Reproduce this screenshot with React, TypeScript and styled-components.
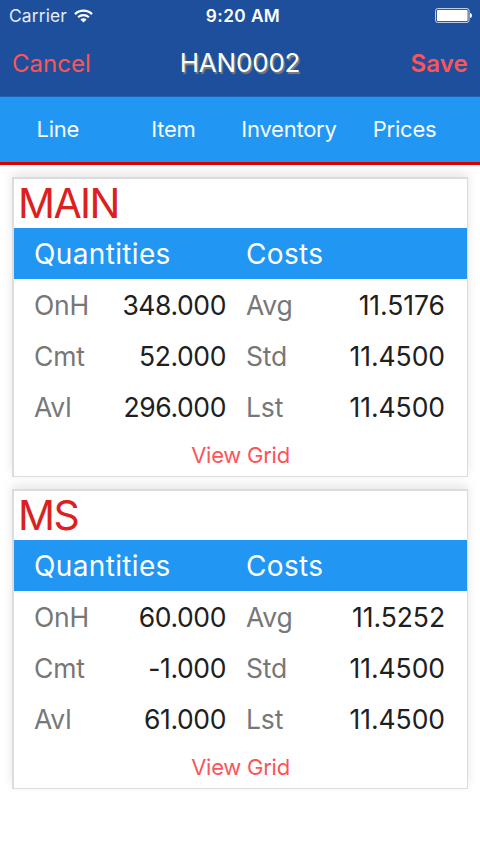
import React from "react";
import styled, { createGlobalStyle } from "styled-components";

const GlobalStyle = createGlobalStyle`
  *, *::before, *::after { box-sizing: border-box; }
  body {
    margin: 0;
    background: #fff;
    font-family: Inter, "Liberation Sans", sans-serif;
    font-weight: 400;
  }
  button { font: inherit; border: 0; padding: 0; background: none; }
`;

const Screen = styled.div`
  width: 480px;
  height: 852px;
  overflow: hidden;
  background: #fff;
`;

const Header = styled.header`
  height: 97px;
  background: #1d4f9c;
  border-bottom: 1px solid #1c62ae;
`;

const StatusBar = styled.div`
  display: grid;
  grid-template-columns: 1fr auto 1fr;
  align-items: center;
  height: 31px;
  padding: 0 7px 0 9px;
  color: #fff;
`;

const Carrier = styled.div`
  display: flex;
  align-items: center;
  gap: 7px;
  font-size: 17.4px;
  letter-spacing: 0.15px;
  color: #e6edf6;
`;

const Clock = styled.div`
  font-size: 17.3px;
  font-weight: 600;
  letter-spacing: 0.4px;
  padding-left: 4px;
`;

const Battery = styled.svg`
  justify-self: end;
`;

const NavBar = styled.div`
  display: grid;
  grid-template-columns: 1fr auto 1fr;
  align-items: center;
  height: 64px;
  padding: 0 12px;
`;

const NavButton = styled.button<{ $strong?: boolean }>`
  justify-self: ${(p) => (p.$strong ? "end" : "start")};
  color: #fc5459;
  font-size: 24px;
  font-weight: ${(p) => (p.$strong ? 600 : 400)};
  letter-spacing: ${(p) => (p.$strong ? "0.2px" : "0px")};
`;

const NavTitle = styled.h1`
  margin: -2px 0 0;
  color: #fff;
  font-size: 26px;
  font-weight: 400;
  letter-spacing: -0.2px;
  text-shadow: 1.5px 1.5px 1px #808080;
`;

const Tabs = styled.nav`
  display: grid;
  grid-template-columns: repeat(4, 115.6px);
  align-items: center;
  height: 68px;
  padding-bottom: 1px;
  background: #2296f3;
  border-bottom: 3px solid #d90000;
`;

const Tab = styled.button`
  color: #f4faff;
  font-size: 22px;
  letter-spacing: -0.25px;
`;

const Content = styled.main`
  display: flex;
  flex-direction: column;
  gap: 12px;
  padding: 12px;
`;

const Card = styled.section`
  height: 300px;
  border: solid #dcdcdc;
  border-width: 2px 1px 1px 2px;
  background: #fff;
  box-shadow: 0 -4px 10px rgba(0, 0, 0, 0.1);
`;

const CardTitle = styled.h2`
  height: 49px;
  margin: 0;
  padding-left: 4px;
  color: #dc2020;
  font-size: 41px;
  line-height: 48px;
  font-weight: 400;
  letter-spacing: -1.6px;
`;

const Columns = styled.div<{ $heading?: boolean }>`
  display: grid;
  grid-template-columns: 212px 1fr;
  align-items: center;
  height: 51px;
  padding: 0 22px 0 20px;
  color: #fff;
  background: ${(p) => (p.$heading ? "#2296f3" : "transparent")};
`;

const Heading = styled.div`
  font-size: 28px;
  letter-spacing: 0.35px;
`;

const Field = styled.div<{ $end?: number }>`
  display: flex;
  align-items: center;
  justify-content: space-between;
  padding-right: ${(p) => p.$end ?? 0}px;
  font-size: 26.5px;
`;

const Label = styled.span`
  color: #777;
  letter-spacing: -0.15px;
`;

const Value = styled.span<{ $tight?: boolean }>`
  color: #202020;
  letter-spacing: ${(p) => (p.$tight ? "-0.4px" : "-0.05px")};
`;

const GridLink = styled.button`
  display: block;
  width: 100%;
  height: 45px;
  color: #fc5459;
  font-size: 22px;
  letter-spacing: -0.25px;
`;

type Row = [string, string, string, string];

const warehouses: { name: string; rows: Row[] }[] = [
  {
    name: "MAIN",
    rows: [
      ["OnH", "348.000", "Avg", "11.5176"],
      ["Cmt", "52.000", "Std", "11.4500"],
      ["Avl", "296.000", "Lst", "11.4500"],
    ],
  },
  {
    name: "MS",
    rows: [
      ["OnH", "60.000", "Avg", "11.5252"],
      ["Cmt", "-1.000", "Std", "11.4500"],
      ["Avl", "61.000", "Lst", "11.4500"],
    ],
  },
];

function WifiIcon() {
  return (
    <svg width="19" height="14" viewBox="0 0 19 14" fill="none">
      <path d="M1 5.1 A12.2 12.2 0 0 1 18 5.1" stroke="#fff" strokeWidth="2.2" />
      <path d="M4.1 8.3 A7.8 7.8 0 0 1 14.9 8.3" stroke="#fff" strokeWidth="2.1" />
      <path d="M6.4 10.5 A4.4 4.4 0 0 1 12.6 10.5 L9.5 13.6 Z" fill="#fff" />
    </svg>
  );
}

function BatteryIcon() {
  return (
    <Battery width="38" height="15" viewBox="0 0 38 15">
      <rect x="0.6" y="0.6" width="33.4" height="13.8" rx="2" fill="none" stroke="#cfdbec" strokeWidth="1" />
      <rect x="2" y="2" width="30.6" height="11" rx="0.8" fill="#fff" />
      <path d="M35 5 C37.6 5.3 37.6 9.7 35 10 Z" fill="#fff" />
    </Battery>
  );
}

export default function App() {
  return (
    <Screen>
      <GlobalStyle />
      <Header>
        <StatusBar>
          <Carrier>
            Carrier
            <WifiIcon />
          </Carrier>
          <Clock>9:20 AM</Clock>
          <BatteryIcon />
        </StatusBar>
        <NavBar>
          <NavButton>Cancel</NavButton>
          <NavTitle>HAN0002</NavTitle>
          <NavButton $strong>Save</NavButton>
        </NavBar>
      </Header>
      <Tabs>
        {["Line", "Item", "Inventory", "Prices"].map((t) => (
          <Tab key={t}>{t}</Tab>
        ))}
      </Tabs>
      <Content>
        {warehouses.map((w) => (
          <Card key={w.name}>
            <CardTitle>{w.name}</CardTitle>
            <Columns $heading>
              <Heading>Quantities</Heading>
              <Heading>Costs</Heading>
            </Columns>
            {w.rows.map(([qtyLabel, qty, costLabel, cost]) => (
              <Columns key={qtyLabel}>
                <Field $end={20}>
                  <Label>{qtyLabel}</Label>
                  <Value $tight>{qty}</Value>
                </Field>
                <Field>
                  <Label>{costLabel}</Label>
                  <Value>{cost}</Value>
                </Field>
              </Columns>
            ))}
            <GridLink>View Grid</GridLink>
          </Card>
        ))}
      </Content>
    </Screen>
  );
}
